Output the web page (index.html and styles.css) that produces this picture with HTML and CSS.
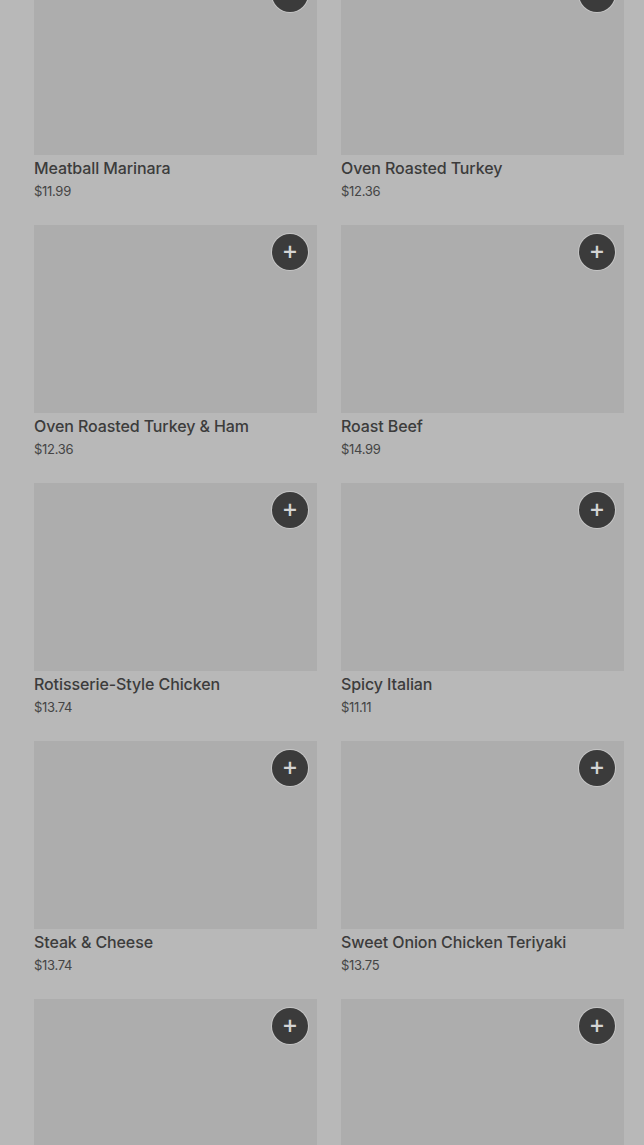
FILE: index.html
```html
<!DOCTYPE html>
<html lang="en">
<head>
    <meta charset="utf-8">
    <meta name="viewport" content="width=device-width, initial-scale=1">
    <title>Menu</title>
    <link rel="stylesheet" href="styles.css">
</head>
<body>
    <div class="grid">
        <div class="item">
            <div class="thumb"><button class="add">+</button></div>
            <div class="name">Meatball Marinara</div>
            <div class="price">$11.99</div>
        </div>
        <div class="item">
            <div class="thumb"><button class="add">+</button></div>
            <div class="name">Oven Roasted Turkey</div>
            <div class="price">$12.36</div>
        </div>
        <div class="item">
            <div class="thumb"><button class="add">+</button></div>
            <div class="name">Oven Roasted Turkey &amp; Ham</div>
            <div class="price">$12.36</div>
        </div>
        <div class="item">
            <div class="thumb"><button class="add">+</button></div>
            <div class="name">Roast Beef</div>
            <div class="price">$14.99</div>
        </div>
        <div class="item">
            <div class="thumb"><button class="add">+</button></div>
            <div class="name">Rotisserie-Style Chicken</div>
            <div class="price">$13.74</div>
        </div>
        <div class="item">
            <div class="thumb"><button class="add">+</button></div>
            <div class="name">Spicy Italian</div>
            <div class="price">$11.11</div>
        </div>
        <div class="item">
            <div class="thumb"><button class="add">+</button></div>
            <div class="name">Steak &amp; Cheese</div>
            <div class="price">$13.74</div>
        </div>
        <div class="item">
            <div class="thumb"><button class="add">+</button></div>
            <div class="name">Sweet Onion Chicken Teriyaki</div>
            <div class="price">$13.75</div>
        </div>
        <div class="item">
            <div class="thumb"><button class="add">+</button></div>
            <div class="name">Tuna</div>
            <div class="price">$11.99</div>
        </div>
        <div class="item">
            <div class="thumb"><button class="add">+</button></div>
            <div class="name">Veggie Delite</div>
            <div class="price">$9.99</div>
        </div>
    </div>
</body>
</html>
```

FILE: styles.css
```css
body {
    margin: 0;
    padding: 0;
    background-color: #b8b8b8;
    font-family: Inter, 'Noto Sans', sans-serif;
    color: #3c3c3c;
    overflow: hidden;
}

.grid {
    display: grid;
    grid-template-columns: 283px 283px;
    column-gap: 24px;
    padding: 0 20px 0 34px;
    margin-top: -33px;
}

.item {
    height: 258px;
}

.thumb {
    position: relative;
    height: 188px;
    background-color: #adadad;
}

.add {
    position: absolute;
    top: 9px;
    right: 9px;
    width: 36px;
    height: 36px;
    padding: 0 0 1px 0;
    border: none;
    border-radius: 50%;
    background-color: #3b3b3b;
    color: #d4d4d4;
    font-family: 'DejaVu Sans', sans-serif;
    font-size: 19px;
    font-weight: bold;
    line-height: 35px;
    text-align: center;
    box-shadow: 0 0 0 1px rgba(255, 255, 255, 0.3);
}

.name {
    margin-top: 4px;
    font-size: 16px;
    line-height: 18px;
    font-weight: 500;
    letter-spacing: -0.1px;
}

.price {
    margin-top: 6px;
    font-size: 13px;
    line-height: 16px;
    color: #454545;
    letter-spacing: -0.3px;
}
```
